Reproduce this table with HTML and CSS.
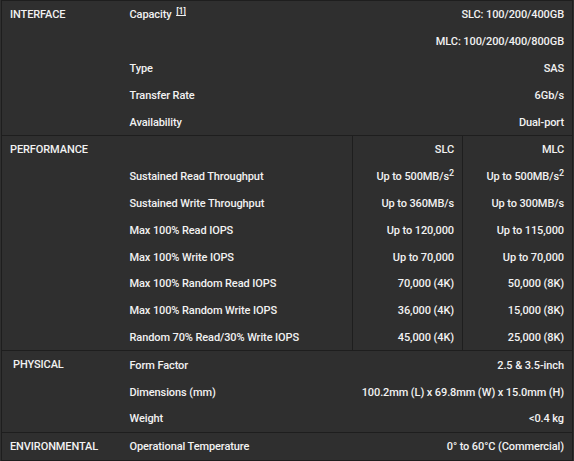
FILE: index.html
```html
<!DOCTYPE html>
<html lang="en">
<head>
<meta charset="utf-8">
<title>Specifications</title>
<link rel="stylesheet" href="styles.css">
</head>
<body>
<table class="spec">
  <colgroup>
    <col class="c-cat">
    <col class="c-item">
    <col class="c-slc">
    <col class="c-mlc">
  </colgroup>
  <tbody class="sect">
    <tr>
      <th class="cat" rowspan="5">INTERFACE</th>
      <td class="item">Capacity <sup class="ref"><a>[1]</a></sup></td>
      <td class="val" colspan="2">SLC: 100/200/400GB</td>
    </tr>
    <tr><td class="item"></td><td class="val" colspan="2">MLC: 100/200/400/800GB</td></tr>
    <tr><td class="item">Type</td><td class="val" colspan="2">SAS</td></tr>
    <tr><td class="item">Transfer Rate</td><td class="val" colspan="2">6Gb/s</td></tr>
    <tr><td class="item">Availability</td><td class="val" colspan="2">Dual-port</td></tr>
  </tbody>
  <tbody class="sect perf">
    <tr>
      <th class="cat" rowspan="8">PERFORMANCE</th>
      <td class="item"></td>
      <td class="val split">SLC</td>
      <td class="val split">MLC</td>
    </tr>
    <tr><td class="item">Sustained Read Throughput</td><td class="val split">Up to 500MB/s<sup class="fn">2</sup></td><td class="val split">Up to 500MB/s<sup class="fn">2</sup></td></tr>
    <tr><td class="item">Sustained Write Throughput</td><td class="val split">Up to 360MB/s</td><td class="val split">Up to 300MB/s</td></tr>
    <tr><td class="item">Max 100% Read IOPS</td><td class="val split">Up to 120,000</td><td class="val split">Up to 115,000</td></tr>
    <tr><td class="item">Max 100% Write IOPS</td><td class="val split">Up to 70,000</td><td class="val split">Up to 70,000</td></tr>
    <tr><td class="item">Max 100% Random Read IOPS</td><td class="val split">70,000 (4K)</td><td class="val split">50,000 (8K)</td></tr>
    <tr><td class="item">Max 100% Random Write IOPS</td><td class="val split">36,000 (4K)</td><td class="val split">15,000 (8K)</td></tr>
    <tr><td class="item">Random 70% Read/30% Write IOPS</td><td class="val split">45,000 (4K)</td><td class="val split">25,000 (8K)</td></tr>
  </tbody>
  <tbody class="sect">
    <tr>
      <th class="cat cat-indent" rowspan="3">PHYSICAL</th>
      <td class="item">Form Factor</td>
      <td class="val" colspan="2">2.5 &amp; 3.5-inch</td>
    </tr>
    <tr><td class="item">Dimensions (mm)</td><td class="val" colspan="2">100.2mm (L) x 69.8mm (W) x 15.0mm (H)</td></tr>
    <tr><td class="item">Weight</td><td class="val" colspan="2">&lt;0.4 kg</td></tr>
  </tbody>
  <tbody class="sect">
    <tr>
      <th class="cat">ENVIRONMENTAL</th>
      <td class="item">Operational Temperature</td>
      <td class="val" colspan="2">0° to 60°C (Commercial)</td>
    </tr>
  </tbody>
</table>
</body>
</html>
```

FILE: styles.css
```css
html, body {
  margin: 0;
  padding: 0;
  background: #2f2f2f;
}

body {
  font-family: Roboto, "Liberation Sans", sans-serif;
  font-weight: 500;
  font-size: 11px;
  letter-spacing: -0.1px;
  color: #f2f2f2;
}

.spec {
  margin-left: 1px;
  width: 571px;
  table-layout: fixed;
  border-collapse: collapse;
  border: 1px solid #1e1e1e;
}

.c-cat { width: 120px; }
.c-item { width: 231px; }
.c-slc { width: 110px; }
.c-mlc { width: 110px; }

.sect {
  border-top: 1px solid #1e1e1e;
  border-bottom: 1px solid #1e1e1e;
}

.spec td {
  height: 24.8px;
  padding: 2px 8px 0;
  line-height: 14px;
  vertical-align: middle;
  white-space: nowrap;
}

.spec th.cat {
  padding: 2px 8px 0;
  height: auto;
  line-height: 24px;
  text-align: left;
  vertical-align: top;
  font-weight: 500;
  white-space: nowrap;
}

.spec th.cat-indent {
  padding-left: 11px;
}

.val {
  text-align: right;
}

.perf .split {
  border-left: 1px solid #1e1e1e;
}

.ref {
  font-size: 9px;
  vertical-align: 4px;
  line-height: 0;
  margin-left: 2px;
}

.ref a {
  text-decoration: underline;
  color: #f2f2f2;
}

.fn {
  font-size: 9px;
  vertical-align: 4px;
  line-height: 0;
}
```
